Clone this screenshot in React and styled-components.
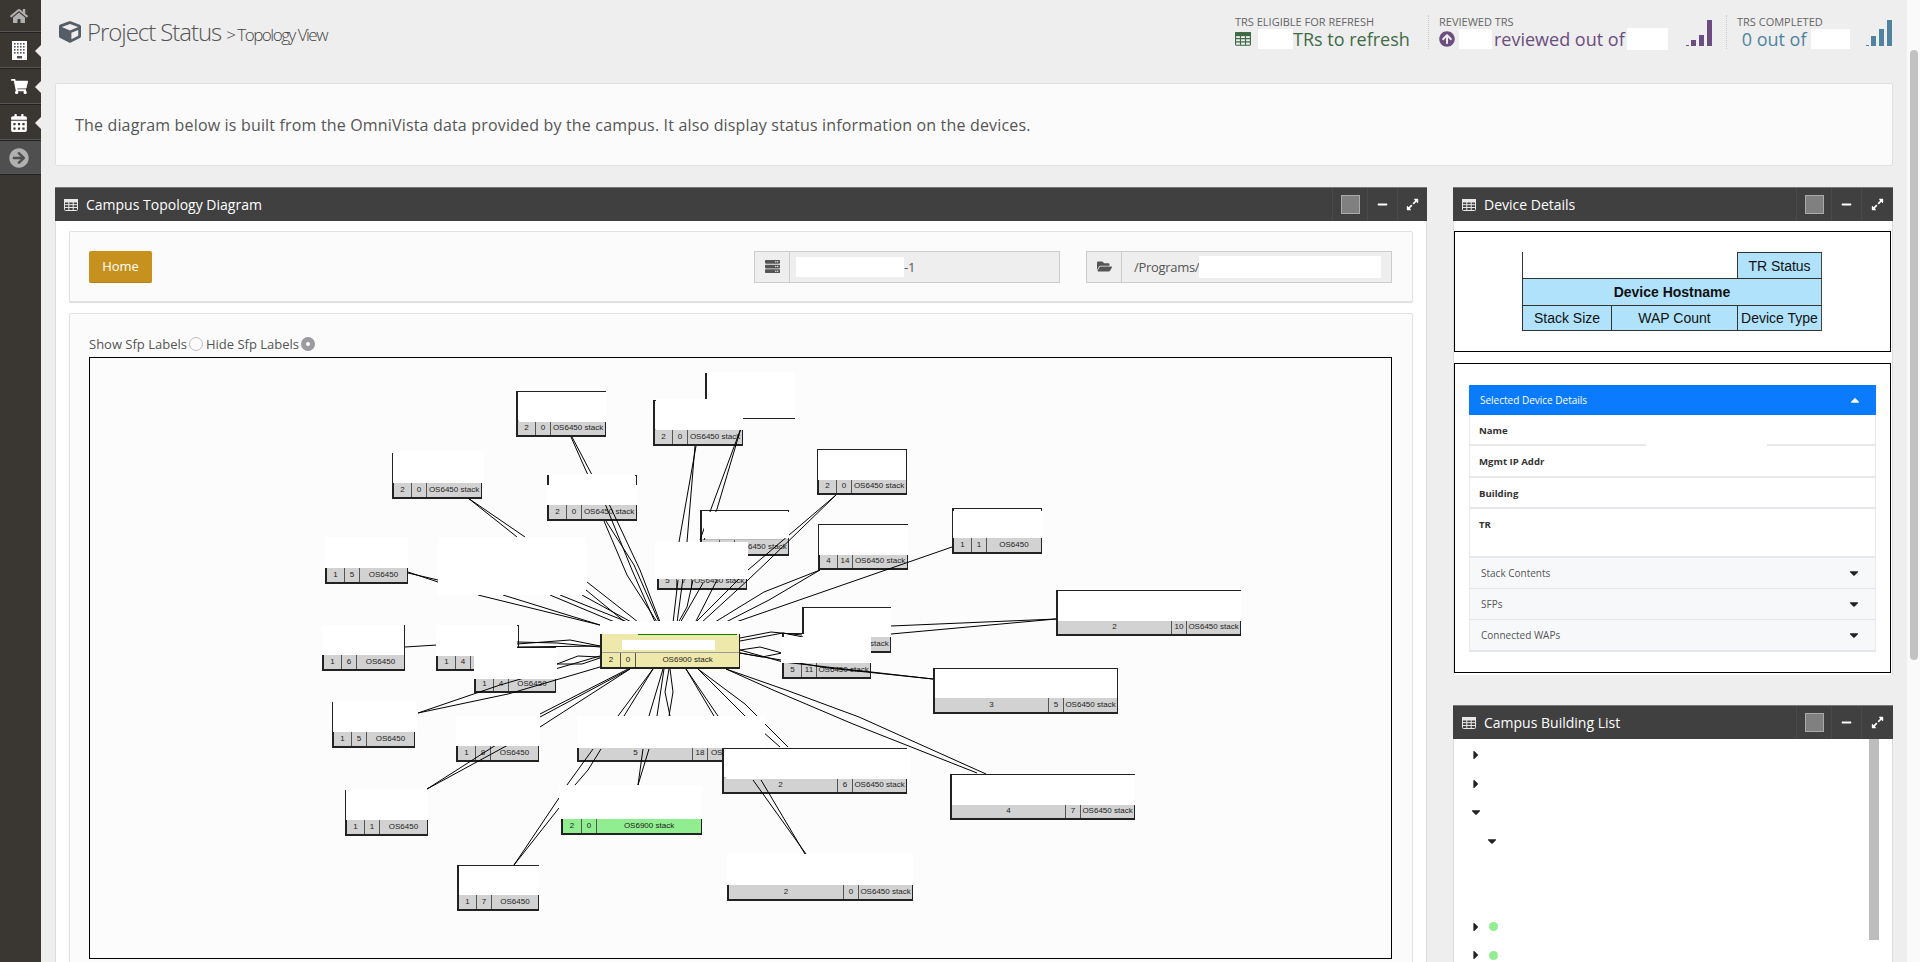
import React from "react";
import styled, { createGlobalStyle } from "styled-components";
import {
  FaHome, FaShoppingCart, FaCalendarAlt, FaArrowCircleRight, FaCube,
  FaMinus, FaExpandAlt, FaServer, FaFolderOpen, FaArrowCircleUp, FaCaretUp, FaCaretDown, FaCaretRight,
} from "react-icons/fa";

const OX = 90;
const OY = 358;

const GlobalStyle = createGlobalStyle`
  html, body { margin: 0; padding: 0; height: 962px; overflow: hidden; }
  body { font-family: "Open Sans", "Liberation Sans", sans-serif; background: #eeeeee; color: #555; }
  * { box-sizing: border-box; }
`;

const Shell = styled.div`
  display: flex;
  height: 962px;
  overflow: hidden;
`;

const Sidebar = styled.nav`
  width: 41px;
  flex: none;
  background: #3a3632;
  display: flex;
  flex-direction: column;
`;

const NavItem = styled.div`
  position: relative;
  height: ${(p) => p.$h}px;
  display: flex;
  align-items: center;
  justify-content: center;
  padding-right: 3px;
  color: ${(p) => (p.$dim ? "#b0b0b0" : "#fff")};
  background: ${(p) => (p.$toggle ? "#4f4f4f" : "transparent")};
  border-bottom: 1px solid #222;
  box-shadow: inset 0 -2px 0 -1px #555;
  font-size: ${(p) => p.$size || 18}px;
  ${(p) =>
    p.$notch &&
    `&:after {
      content: "";
      position: absolute;
      right: 0;
      top: 50%;
      margin-top: -6px;
      border: 6px solid transparent;
      border-right-color: #eee;
      border-left-width: 0;
    }`}
`;

const BuildingIcon = () => (
  <svg width="15" height="19" viewBox="0 0 15 19">
    <rect width="15" height="19" fill="#fff" />
    {[2, 5, 8, 11].map((y) =>
      [2, 5, 8, 11].map((x) => <rect key={`${x}-${y}`} x={x} y={y} width="1.6" height="1.6" fill="#555" />)
    )}
    <rect x="5" y="15" width="5" height="2.5" fill="#555" />
  </svg>
);

const TableIcon = ({ w = 14, h = 12 }) => (
  <svg width={w} height={h} viewBox="0 0 14 12" fill="none" stroke="currentColor" strokeWidth="1">
    <rect x="0.5" y="0.5" width="13" height="11" rx="1" />
    <rect x="0.5" y="0.5" width="13" height="2.5" fill="currentColor" />
    <path d="M0.5 5.7H13.5M0.5 8.5H13.5M4.8 3V11.5M9.2 3V11.5" />
  </svg>
);

const Main = styled.main`
  flex: 1;
  min-width: 0;
  padding: 0 14px;
`;

const TopBar = styled.header`
  height: 83px;
  display: flex;
  justify-content: space-between;
  padding: 15px 0 0 4px;
`;

const Title = styled.h1`
  margin: 1px 0 0;
  display: flex;
  align-items: baseline;
  font-weight: 300;
  font-size: 24px;
  line-height: 32px;
  height: 32px;
  letter-spacing: -1.05px;
  color: #555;
  svg { font-size: 22px; margin-right: 6px; color: #555e66; align-self: center; }
  small { font-size: 17px; font-weight: 300; margin-left: 5px; letter-spacing: -1.5px; color: #444; }
`;

const Stats = styled.div`
  display: flex;
`;

const Stat = styled.div`
  display: flex;
  padding: 0 ${(p) => p.$right || 0}px 0 ${(p) => (p.$first ? 0 : 10)}px;
  height: 34px;
  width: ${(p) => p.$w}px;
  border-left: ${(p) => (p.$first ? "none" : "1px dotted #ccc")};
  justify-content: space-between;
  color: ${(p) => p.$color};
`;

const StatLabel = styled.div`
  font-size: 11px;
  font-weight: 400;
  line-height: 13px;
  color: #666;
  white-space: nowrap;
  text-transform: uppercase;
`;

const StatValue = styled.div`
  display: flex;
  align-items: center;
  font-size: 18px;
  line-height: 22px;
  white-space: nowrap;
  svg { font-size: 16px; flex: none; }
`;

const Redacted = styled.span`
  display: inline-block;
  width: ${(p) => p.$w}px;
  height: ${(p) => p.$h}px;
  margin: ${(p) => p.$m || "0"};
  background: #fff;
  flex: none;
`;

const Spark = styled.svg`
  width: 27px;
  height: 26px;
  margin: 5px 0 0 0;
  fill: currentColor;
  flex: none;
`;

const InfoBox = styled.section`
  height: 83px;
  background: #fbfbfb;
  border: 1px solid #e0e0e0;
  border-radius: 2px;
  display: flex;
  align-items: center;
  padding: 0 0 0 19px;
  font-size: 16px;
  color: #555;
  letter-spacing: 0.17px;
`;

const Columns = styled.div`
  display: grid;
  grid-template-columns: 1372px 440px;
  gap: 26px;
  margin-top: 21px;
`;

const Column = styled.div`
  display: flex;
  flex-direction: column;
  gap: 30px;
`;

const Panel = styled.section`
  background: #fff;
  border-left: 1px solid #ddd;
  border-right: 1px solid #ddd;
`;

const PanelHead = styled.div`
  height: 34px;
  background: #404040;
  border-top: 1px solid #777;
  margin: 0 -1px;
  display: flex;
  align-items: center;
  color: #fff;
  font-size: 14px;
  padding-left: 9px;
  > svg { margin-right: 8px; color: #e8e8e8; flex: none; }
`;

const PanelTitle = styled.span`
  flex: 1;
`;

const HeadBtn = styled.div`
  width: ${(p) => p.$w}px;
  height: 100%;
  border-left: 1px solid #4a4a4a;
  display: flex;
  align-items: center;
  justify-content: center;
  font-size: 13px;
`;

const ColorSwatch = styled.div`
  width: 19px;
  height: 19px;
  background: #808080;
  border: 1px solid #aaa;
`;

const PanelBody = styled.div`
  padding: ${(p) => p.$pad || "10px 13px 0"};
`;

const Well = styled.div`
  background: #fbfbfb;
  border: 1px solid #e2e2e2;
  border-radius: 2px;
  padding: 19px;
  box-shadow: 0 1px 1px #ddd;
`;

const HomeRow = styled(Well)`
  height: 71px;
  display: flex;
  align-items: center;
  gap: 26px;
  margin-bottom: 11px;
  padding-right: 20px;
`;

const HomeButton = styled.button`
  width: 63px;
  height: 32px;
  margin-right: auto;
  background: #c7911f;
  border: 0;
  border-bottom: 1px solid #b58419;
  border-radius: 2px;
  color: #fff;
  font: 400 13px "Open Sans", sans-serif;
`;

const InputGroup = styled.div`
  width: 306px;
  height: 32px;
  display: flex;
  align-items: center;
  background: #eee;
  border: 1px solid #ccc;
  font-size: 13px;
  color: #555;
`;

const Addon = styled.div`
  width: 35px;
  height: 100%;
  flex: none;
  display: flex;
  align-items: center;
  justify-content: center;
  border-right: 1px solid #ccc;
  font-size: 15px;
  color: #555;
`;

const InputText = styled.div`
  display: flex;
  align-items: center;
  padding-left: ${(p) => p.$pad}px;
  letter-spacing: -0.3px;
`;

const RadioRow = styled.div`
  height: 27px;
  display: flex;
  align-items: center;
  gap: 2px;
  font-size: 13px;
  color: #555;
`;

const Radio = styled.span`
  width: 14px;
  height: 14px;
  border-radius: 50%;
  margin-right: 1px;
  border: ${(p) => (p.$on ? "5px solid #9a9a9f" : "1px solid #bbb")};
  background: ${(p) => (p.$on ? "#fff" : "#fbfbfb")};
`;

const DiagramWell = styled(Well)`
  padding: 16px 19px 0;
  height: 700px;
`;

const Canvas = styled.div`
  position: relative;
  width: 1303px;
  height: 602px;
  background: #fcfcfc;
  border: 1px solid #000;
  overflow: hidden;
`;

const Wires = styled.svg`
  position: absolute;
  left: 0;
  top: 0;
  z-index: 2;
  fill: none;
  stroke: #000;
  stroke-width: 1;
`;

const Node = styled.div`
  position: absolute;
  left: ${(p) => p.$x - OX}px;
  top: ${(p) => p.$y - OY}px;
  width: ${(p) => p.$w}px;
  height: 46px;
  z-index: 1;
  background: ${(p) => (p.$tone === "yellow" ? "#eee8aa" : "#fff")};
  border: 1px solid #222;
  border-left-width: 2px;
  border-bottom-width: 2px;
  display: flex;
  flex-direction: column;
  justify-content: flex-end;
`;

const Strip = styled.div`
  height: 15px;
  display: grid;
  grid-template-columns: ${(p) => p.$c1 - 1}px ${(p) => p.$c2}px 1fr;
  background: ${(p) => (p.$tone === "yellow" ? "#eee8aa" : p.$tone === "green" ? "#90ee90" : "#d2d2d2")};
  border-top: 1px solid ${(p) => (p.$tone === "yellow" ? "#999" : "#bbb")};
  font: 8px/14px "Liberation Sans", Arial, sans-serif;
  color: #222;
  text-align: center;
  white-space: nowrap;
  overflow: hidden;
`;

const StripCell = styled.div`
  border-right: 1px solid #555;
  &:last-child { border-right: 0; }
`;

const Patch = styled.div`
  position: absolute;
  z-index: 3;
  left: ${(p) => p.$x1 - OX}px;
  top: ${(p) => p.$y1 - OY}px;
  width: ${(p) => p.$x2 - p.$x1}px;
  height: ${(p) => p.$y2 - p.$y1}px;
  background: ${(p) => p.$fill || "#fff"};
`;

const DetailBox = styled.div`
  border: 1px solid #000;
  margin: ${(p) => p.$m};
  height: ${(p) => p.$h}px;
  padding: ${(p) => p.$pad};
  background: #fff;
`;

const Legend = styled.div`
  width: 300px;
  display: grid;
  grid-template-columns: 89px 126px 85px;
  grid-template-rows: 26px 27px 26px;
  font: 14px "Liberation Sans", Arial, sans-serif;
  color: #111;
`;

const LegendCell = styled.div`
  grid-column: ${(p) => p.$col};
  display: flex;
  align-items: center;
  justify-content: center;
  background: ${(p) => (p.$blank ? "#fff" : "#b0e3fb")};
  font-weight: ${(p) => (p.$bold ? 700 : 400)};
  border-left: 1px solid #333;
  border-top: ${(p) => (p.$blank ? "0" : "1px solid #333")};
  border-bottom: ${(p) => (p.$last ? "1px solid #333" : "0")};
  border-right: ${(p) => (p.$edge ? "1px solid #444" : "0")};
`;

const Accordion = styled.div`
  position: relative;
  border-left: 1px solid #e6e8eb;
  border-right: 1px solid #e6e8eb;
  border-bottom: 1px solid #e6e8eb;
`;

const AccHead = styled.div`
  height: ${(p) => p.$h || 31}px;
  display: flex;
  align-items: center;
  justify-content: space-between;
  padding: 0 14px 0 11px;
  font-size: 10px;
  color: ${(p) => (p.$open ? "#fff" : "#555")};
  background: ${(p) => (p.$open ? "#0a7bff" : "#f7f8fa")};
  border-bottom: ${(p) => (p.$open ? "0" : "1px solid #e3e5e8")};
  margin: ${(p) => (p.$open ? "0 -1px" : "0")};
  svg { font-size: 14px; color: ${(p) => (p.$open ? "#fff" : "#222")}; }
  &:last-child { border-bottom: 0; }
`;

const AccRow = styled.div`
  height: ${(p) => p.$h || 31}px;
  padding: 9px 0 0 9px;
  font-size: 9.6px;
  line-height: 14px;
  font-weight: 700;
  color: #333;
  border-bottom: 2px solid #e6e8eb;
`;

const NameCover = styled.div`
  position: absolute;
  left: 176px;
  top: 58px;
  width: 121px;
  height: 4px;
  background: #fff;
`;

const Tree = styled.ul`
  list-style: none;
  margin: 0;
  padding: 2px 0 0 15px;
`;

const TreeBody = styled.div`
  display: flex;
  justify-content: space-between;
  padding-right: 13px;
  height: 240px;
`;

const TreeRow = styled.li`
  height: ${(p) => p.$h || 28.6}px;
  display: flex;
  align-items: center;
  gap: 6px;
  padding-left: ${(p) => (p.$child ? 16 : 0)}px;
  color: #222;
  font-size: 14px;
`;

const Dot = styled.span`
  width: 9px;
  height: 9px;
  border-radius: 50%;
  background: #90ee90;
`;

const TreeScroll = styled.div`
  width: 10px;
  height: 201px;
  background: #bdbdbd;
`;

const PageTrack = styled.div`
  width: 13px;
  flex: none;
  background: #fafafa;
  padding: 50px 2px 0 3px;
`;

const PageThumb = styled.div`
  height: 610px;
  background: #c2c2c2;
  border-radius: 4px;
`;

const Controls = ({ last }) => (
  <>
    <HeadBtn $w={35}><ColorSwatch /></HeadBtn>
    <HeadBtn $w={30}><FaMinus size={11} /></HeadBtn>
    <HeadBtn $w={last}><FaExpandAlt size={13} /></HeadBtn>
  </>
);

// x, y, width, column widths, values, tone
const nodes = [
  [516, 391, 90, 19, 15, "2", "0", "OS6450 stack"],
  [653, 400, 90, 19, 15, "2", "0", "OS6450 stack"],
  [705, 373, 90, 19, 15, "", "", ""],
  [392, 453, 90, 19, 15, "2", "0", "OS6450 stack"],
  [547, 475, 90, 19, 15, "2", "0", "OS6450 stack"],
  [325, 538, 83, 19, 15, "1", "5", "OS6450"],
  [817, 449, 90, 19, 15, "2", "0", "OS6450 stack"],
  [700, 510, 89, 19, 15, "", "", "OS6450 stack"],
  [657, 544, 90, 19, 15, "5", "7", "OS6450 stack"],
  [818, 524, 90, 19, 15, "4", "14", "OS6450 stack"],
  [952, 508, 90, 19, 15, "1", "1", "OS6450"],
  [1056, 590, 185, 115, 15, "2", "10", "OS6450 stack"],
  [802, 607, 89, 19, 15, "", "", "OS6450 stack"],
  [782, 633, 89, 19, 15, "5", "11", "OS6450 stack"],
  [600, 623, 140, 20, 15, "2", "0", "OS6900 stack", "yellow"],
  [933, 668, 185, 115, 15, "3", "5", "OS6450 stack"],
  [950, 774, 185, 115, 15, "4", "7", "OS6450 stack"],
  [577, 716, 188, 115, 15, "5", "18", "OS6450 stack"],
  [722, 748, 185, 115, 15, "2", "6", "OS6450 stack"],
  [727, 855, 186, 116, 15, "2", "0", "OS6450 stack"],
  [561, 789, 141, 20, 15, "2", "0", "OS6900 stack", "green"],
  [457, 865, 82, 19, 15, "1", "7", "OS6450"],
  [345, 790, 83, 19, 15, "1", "1", "OS6450"],
  [456, 716, 83, 19, 15, "1", "8", "OS6450"],
  [332, 702, 83, 19, 15, "1", "5", "OS6450"],
  [436, 625, 83, 19, 15, "1", "4", "OS6450"],
  [474, 647, 82, 19, 15, "1", "4", "OS6450"],
  [322, 625, 83, 19, 15, "1", "6", "OS6450"],
];

const wires = [
  "571,437 587,473 606,506 632,570 655,622",
  "572,437 591,473 610,506 640,570 660,622",
  "604,521 627,575 657,622",
  "606,521 634,565 659,622",
  "696,446 679,542",
  "695,446 687,542",
  "741,428 711,509 700,540",
  "741,428 717,509 704,540",
  "678,580 673,623",
  "683,578 677,623",
  "693,580 687,607 678,623",
  "703,583 680,623",
  "717,580 695,623",
  "836,495 748,570 695,623",
  "836,495 769,560 748,580 701,623",
  "820,570 764,592 715,622",
  "820,570 769,600 726,622",
  "952,547 736,622",
  "740,638 771,632 802,635",
  "740,641 783,633 803,637",
  "740,650 760,647 782,653",
  "740,653 762,657 782,653",
  "891,626 1056,619",
  "891,634 1056,619",
  "740,650 783,662 933,679",
  "740,653 828,668 933,679",
  "726,669 786,690 859,717 986,774",
  "726,669 773,690 853,724 977,773",
  "698,669 745,704 788,747",
  "698,669 745,716 780,747",
  "686,669 718,716",
  "686,669 714,716",
  "753,780 806,854",
  "761,780 805,854",
  "663,669 649,716",
  "664,669 657,716",
  "669,669 665,692 670,716",
  "670,669 673,692 669,716",
  "649,749 638,785",
  "643,749 638,785",
  "653,669 618,716",
  "653,669 624,716",
  "601,749 588,770 575,785",
  "593,749 567,785",
  "559,798 514,865",
  "559,808 514,865",
  "630,669 540,717",
  "628,669 540,714",
  "630,669 540,727",
  "496,745 427,789",
  "508,745 427,789",
  "418,713 508,694 600,667",
  "418,713 500,685 600,656",
  "557,664 578,656 600,657",
  "557,664 582,664 600,658",
  "517,642 557,643 600,647",
  "517,647 600,646",
  "517,644 570,640 600,646",
  "405,647 437,645",
  "408,572 438,582",
  "408,573 438,580",
  "478,595 600,625",
  "503,595 600,625",
  "468,498 517,537",
  "468,498 525,537",
  "550,595 617,623",
  "560,595 630,623",
  "582,595 633,623",
  "587,582 638,622",
  "586,590 625,622",
];

const patches = [
  [519, 392, 607, 422], [656, 399, 743, 430], [707, 372, 795, 418], [393, 451, 484, 483],
  [549, 474, 635, 485], [546, 485, 637, 505], [325, 537, 408, 568], [438, 537, 586, 595],
  [818, 450, 906, 480], [704, 512, 789, 538], [655, 542, 748, 579], [819, 525, 908, 555],
  [953, 511, 1043, 538], [1058, 591, 1241, 621], [600, 621, 741, 634], [622, 640, 715, 650],
  [804, 608, 891, 637], [781, 637, 871, 663], [935, 670, 1117, 698], [952, 775, 1135, 805],
  [727, 854, 913, 885], [577, 716, 765, 748], [726, 749, 911, 779], [559, 785, 702, 819],
  [459, 866, 539, 895], [346, 790, 428, 820], [456, 716, 540, 746], [333, 702, 417, 732],
  [474, 648, 557, 679], [436, 625, 517, 656], [322, 625, 404, 655],
];

const Topology = () => (
  <Canvas>
    {nodes.map(([x, y, w, c1, c2, a, b, label, tone]) => (
      <Node key={`${x}-${y}`} $x={x} $y={y} $w={w} $tone={tone}>
        <Strip $c1={c1} $c2={c2} $tone={tone}>
          <StripCell>{a}</StripCell>
          <StripCell>{b}</StripCell>
          <StripCell>{label}</StripCell>
        </Strip>
      </Node>
    ))}
    <Wires width="1301" height="600" viewBox={`${OX} ${OY} 1301 600`}>
      {wires.map((points) => <polyline key={points} points={points} />)}
    </Wires>
    {patches.map(([x1, y1, x2, y2]) => (
      <Patch key={`${x1}-${y1}`} $x1={x1} $y1={y1} $x2={x2} $y2={y2} />
    ))}
    <Patch $x1={638} $y1={634} $x2={737} $y2={635} $fill="#008000" />
  </Canvas>
);

const Bars = ({ heights }) => (
  <Spark viewBox="0 0 27 26">
    <rect x="0" y="25" width="3" height="1" />
    {heights.map((h, i) => (
      <rect key={i} x={5 + i * 8} y={26 - h} width="5" height={h} />
    ))}
  </Spark>
);

export default function App() {
  return (
    <>
      <GlobalStyle />
      <Shell>
        <Sidebar>
          <NavItem $h={33} $dim $size={18}><FaHome /></NavItem>
          <NavItem $h={36} $notch><BuildingIcon /></NavItem>
          <NavItem $h={36} $notch $size={17}><FaShoppingCart /></NavItem>
          <NavItem $h={36} $notch><FaCalendarAlt /></NavItem>
          <NavItem $h={34} $toggle $dim $size={20}><FaArrowCircleRight /></NavItem>
        </Sidebar>
        <Main>
          <TopBar>
            <Title>
              <FaCube />
              Project Status
              <small>&gt; Topology View</small>
            </Title>
            <Stats>
              <Stat $first $w={193} $color="#3f6b45">
                <div>
                  <StatLabel>TRs eligible for refresh</StatLabel>
                  <StatValue>
                    <TableIcon w={16} h={14} />
                    <Redacted $w={35} $h={20} $m="0 0 0 7px" />
                    TRs to refresh
                  </StatValue>
                </div>
              </Stat>
              <Stat $w={298} $right={13} $color="#6b4d7f">
                <div>
                  <StatLabel>Reviewed TRs</StatLabel>
                  <StatValue>
                    <FaArrowCircleUp />
                    <Redacted $w={33} $h={20} $m="0 2px 0 4px" />
                    reviewed out of
                    <Redacted $w={41} $h={22} $m="0 0 0 2px" />
                  </StatValue>
                </div>
                <Bars heights={[6, 11, 26]} />
              </Stat>
              <Stat $w={167} $color="#4e84a0">
                <div>
                  <StatLabel>TRs completed</StatLabel>
                  <StatValue>
                    &nbsp;0 out of
                    <Redacted $w={39} $h={20} $m="0 0 0 4px" />
                  </StatValue>
                </div>
                <Bars heights={[10, 17, 26]} />
              </Stat>
            </Stats>
          </TopBar>
          <InfoBox>
            The diagram below is built from the OmniVista data provided by the campus. It also display status information on the devices.
          </InfoBox>
          <Columns>
            <Column>
              <Panel>
                <PanelHead>
                  <TableIcon />
                  <PanelTitle>Campus Topology Diagram</PanelTitle>
                  <Controls last={30} />
                </PanelHead>
                <PanelBody>
                  <HomeRow>
                    <HomeButton>Home</HomeButton>
                    <InputGroup>
                      <Addon><FaServer /></Addon>
                      <InputText $pad={6}><Redacted $w={108} $h={20} />-1</InputText>
                    </InputGroup>
                    <InputGroup>
                      <Addon><FaFolderOpen /></Addon>
                      <InputText $pad={12}>/Programs/<Redacted $w={182} $h={22} /></InputText>
                    </InputGroup>
                  </HomeRow>
                  <DiagramWell>
                    <RadioRow>
                      Show Sfp Labels<Radio />
                      Hide Sfp Labels<Radio $on />
                    </RadioRow>
                    <Topology />
                  </DiagramWell>
                </PanelBody>
              </Panel>
            </Column>
            <Column>
              <Panel>
                <PanelHead>
                  <TableIcon />
                  <PanelTitle>Device Details</PanelTitle>
                  <Controls last={32} />
                </PanelHead>
                <PanelBody $pad="10px 1px 2px 0">
                  <DetailBox $m="0 0 11px" $h={121} $pad="20px 0 0 67px">
                    <Legend>
                      <LegendCell $col="1 / span 2" $blank />
                      <LegendCell $col="3" $edge>TR Status</LegendCell>
                      <LegendCell $col="1 / span 3" $bold $edge>Device Hostname</LegendCell>
                      <LegendCell $col="1" $last>Stack Size</LegendCell>
                      <LegendCell $col="2" $last>WAP Count</LegendCell>
                      <LegendCell $col="3" $last $edge>Device Type</LegendCell>
                    </Legend>
                  </DetailBox>
                  <DetailBox $m="0" $h={310} $pad="21px 14px 0">
                    <Accordion>
                      <AccHead $open $h={30}>Selected Device Details<FaCaretUp /></AccHead>
                      <AccRow>Name</AccRow>
                      <AccRow $h={32}>Mgmt IP Addr</AccRow>
                      <AccRow>Building</AccRow>
                      <AccRow $h={49}>TR</AccRow>
                      <AccHead>Stack Contents<FaCaretDown /></AccHead>
                      <AccHead>SFPs<FaCaretDown /></AccHead>
                      <AccHead>Connected WAPs<FaCaretDown /></AccHead>
                      <NameCover />
                    </Accordion>
                  </DetailBox>
                </PanelBody>
              </Panel>
              <Panel>
                <PanelHead>
                  <TableIcon />
                  <PanelTitle>Campus Building List</PanelTitle>
                  <Controls last={32} />
                </PanelHead>
                <TreeBody>
                  <Tree>
                    <TreeRow><FaCaretRight /></TreeRow>
                    <TreeRow><FaCaretRight /></TreeRow>
                    <TreeRow><FaCaretDown /></TreeRow>
                    <TreeRow $child><FaCaretDown /></TreeRow>
                    <TreeRow $h={57} />
                    <TreeRow><FaCaretRight /><Dot /></TreeRow>
                    <TreeRow><FaCaretRight /><Dot /></TreeRow>
                  </Tree>
                  <TreeScroll />
                </TreeBody>
              </Panel>
            </Column>
          </Columns>
        </Main>
        <PageTrack><PageThumb /></PageTrack>
      </Shell>
    </>
  );
}
